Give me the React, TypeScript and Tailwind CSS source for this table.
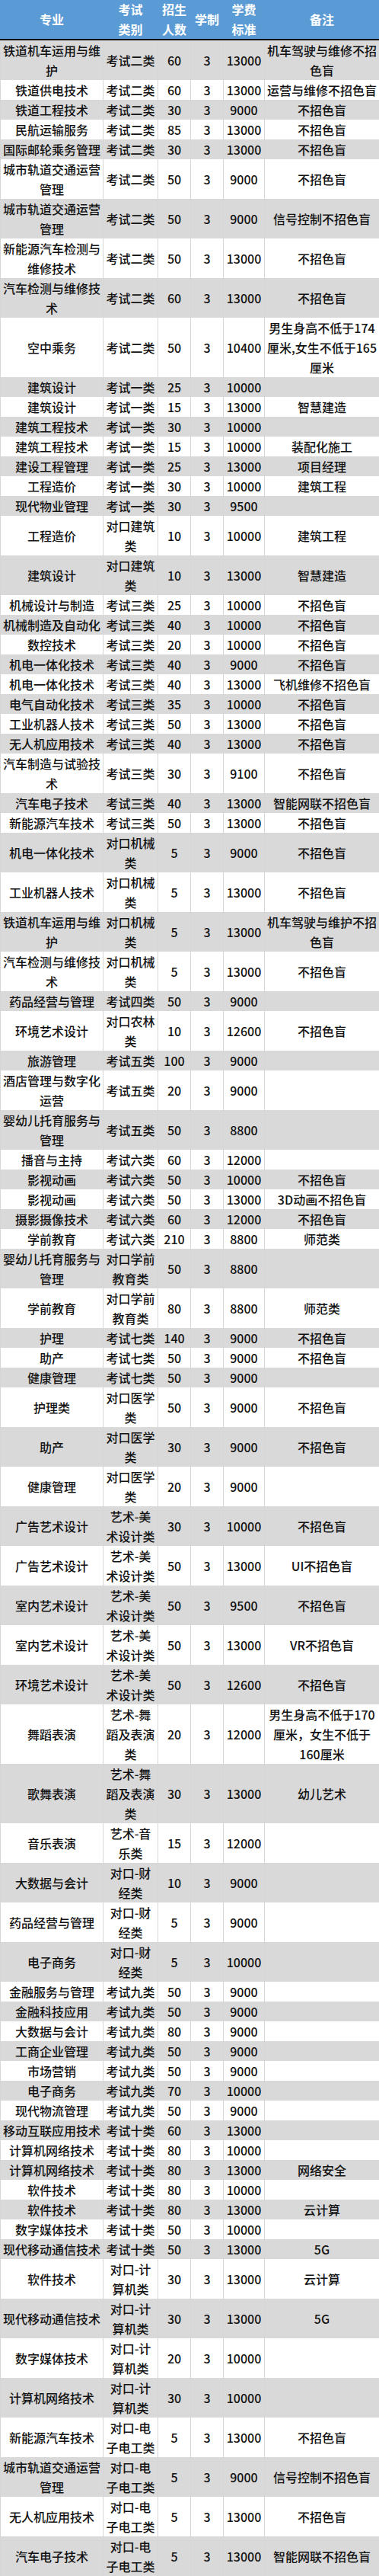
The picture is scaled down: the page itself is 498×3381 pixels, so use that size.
type Row = [string, string, string, string, string, string];

const rows: Row[] = [
  ["铁道机车运用与维护", "考试二类", "60", "3", "13000", "机车驾驶与维修不招色盲"],
  ["铁道供电技术", "考试二类", "60", "3", "13000", "运营与维修不招色盲"],
  ["铁道工程技术", "考试二类", "30", "3", "9000", "不招色盲"],
  ["民航运输服务", "考试二类", "85", "3", "13000", "不招色盲"],
  ["国际邮轮乘务管理", "考试二类", "30", "3", "13000", "不招色盲"],
  ["城市轨道交通运营管理", "考试二类", "50", "3", "9000", "不招色盲"],
  ["城市轨道交通运营管理", "考试二类", "50", "3", "9000", "信号控制不招色盲"],
  ["新能源汽车检测与维修技术", "考试二类", "50", "3", "13000", "不招色盲"],
  ["汽车检测与维修技术", "考试二类", "60", "3", "13000", "不招色盲"],
  ["空中乘务", "考试二类", "50", "3", "10400", "男生身高不低于174厘米,女生不低于165厘米"],
  ["建筑设计", "考试一类", "25", "3", "10000", ""],
  ["建筑设计", "考试一类", "15", "3", "13000", "智慧建造"],
  ["建筑工程技术", "考试一类", "30", "3", "10000", ""],
  ["建筑工程技术", "考试一类", "15", "3", "10000", "装配化施工"],
  ["建设工程管理", "考试一类", "25", "3", "13000", "项目经理"],
  ["工程造价", "考试一类", "30", "3", "10000", "建筑工程"],
  ["现代物业管理", "考试一类", "30", "3", "9500", ""],
  ["工程造价", "对口建筑类", "10", "3", "10000", "建筑工程"],
  ["建筑设计", "对口建筑类", "10", "3", "13000", "智慧建造"],
  ["机械设计与制造", "考试三类", "25", "3", "10000", "不招色盲"],
  ["机械制造及自动化", "考试三类", "40", "3", "10000", "不招色盲"],
  ["数控技术", "考试三类", "20", "3", "10000", "不招色盲"],
  ["机电一体化技术", "考试三类", "40", "3", "9000", "不招色盲"],
  ["机电一体化技术", "考试三类", "40", "3", "13000", "飞机维修不招色盲"],
  ["电气自动化技术", "考试三类", "35", "3", "10000", "不招色盲"],
  ["工业机器人技术", "考试三类", "50", "3", "13000", "不招色盲"],
  ["无人机应用技术", "考试三类", "40", "3", "13000", "不招色盲"],
  ["汽车制造与试验技术", "考试三类", "30", "3", "9100", "不招色盲"],
  ["汽车电子技术", "考试三类", "40", "3", "13000", "智能网联不招色盲"],
  ["新能源汽车技术", "考试三类", "50", "3", "13000", "不招色盲"],
  ["机电一体化技术", "对口机械类", "5", "3", "9000", "不招色盲"],
  ["工业机器人技术", "对口机械类", "5", "3", "13000", "不招色盲"],
  ["铁道机车运用与维护", "对口机械类", "5", "3", "13000", "机车驾驶与维护不招色盲"],
  ["汽车检测与维修技术", "对口机械类", "5", "3", "13000", "不招色盲"],
  ["药品经营与管理", "考试四类", "50", "3", "9000", ""],
  ["环境艺术设计", "对口农林类", "10", "3", "12600", "不招色盲"],
  ["旅游管理", "考试五类", "100", "3", "9000", ""],
  ["酒店管理与数字化运营", "考试五类", "20", "3", "9000", ""],
  ["婴幼儿托育服务与管理", "考试五类", "50", "3", "8800", ""],
  ["播音与主持", "考试六类", "60", "3", "12000", ""],
  ["影视动画", "考试六类", "50", "3", "10000", "不招色盲"],
  ["影视动画", "考试六类", "50", "3", "13000", "3D动画不招色盲"],
  ["摄影摄像技术", "考试六类", "60", "3", "12000", "不招色盲"],
  ["学前教育", "考试六类", "210", "3", "8800", "师范类"],
  ["婴幼儿托育服务与管理", "对口学前教育类", "50", "3", "8800", ""],
  ["学前教育", "对口学前教育类", "80", "3", "8800", "师范类"],
  ["护理", "考试七类", "140", "3", "9000", "不招色盲"],
  ["助产", "考试七类", "50", "3", "9000", "不招色盲"],
  ["健康管理", "考试七类", "50", "3", "9000", ""],
  ["护理类", "对口医学类", "50", "3", "9000", "不招色盲"],
  ["助产", "对口医学类", "30", "3", "9000", "不招色盲"],
  ["健康管理", "对口医学类", "20", "3", "9000", ""],
  ["广告艺术设计", "艺术-美术设计类", "30", "3", "10000", "不招色盲"],
  ["广告艺术设计", "艺术-美术设计类", "50", "3", "13000", "UI不招色盲"],
  ["室内艺术设计", "艺术-美术设计类", "50", "3", "9500", "不招色盲"],
  ["室内艺术设计", "艺术-美术设计类", "50", "3", "13000", "VR不招色盲"],
  ["环境艺术设计", "艺术-美术设计类", "50", "3", "12600", "不招色盲"],
  ["舞蹈表演", "艺术-舞蹈及表演类", "20", "3", "12000", "男生身高不低于170厘米，女生不低于160厘米"],
  ["歌舞表演", "艺术-舞蹈及表演类", "30", "3", "13000", "幼儿艺术"],
  ["音乐表演", "艺术-音乐类", "15", "3", "12000", ""],
  ["大数据与会计", "对口-财经类", "10", "3", "9000", ""],
  ["药品经营与管理", "对口-财经类", "5", "3", "9000", ""],
  ["电子商务", "对口-财经类", "5", "3", "10000", ""],
  ["金融服务与管理", "考试九类", "50", "3", "9000", ""],
  ["金融科技应用", "考试九类", "50", "3", "9000", ""],
  ["大数据与会计", "考试九类", "80", "3", "9000", ""],
  ["工商企业管理", "考试九类", "50", "3", "9000", ""],
  ["市场营销", "考试九类", "50", "3", "9000", ""],
  ["电子商务", "考试九类", "70", "3", "10000", ""],
  ["现代物流管理", "考试九类", "50", "3", "9000", ""],
  ["移动互联应用技术", "考试十类", "60", "3", "13000", ""],
  ["计算机网络技术", "考试十类", "80", "3", "10000", ""],
  ["计算机网络技术", "考试十类", "80", "3", "13000", "网络安全"],
  ["软件技术", "考试十类", "80", "3", "10000", ""],
  ["软件技术", "考试十类", "80", "3", "13000", "云计算"],
  ["数字媒体技术", "考试十类", "50", "3", "10000", ""],
  ["现代移动通信技术", "考试十类", "50", "3", "13000", "5G"],
  ["软件技术", "对口-计算机类", "30", "3", "13000", "云计算"],
  ["现代移动通信技术", "对口-计算机类", "30", "3", "13000", "5G"],
  ["数字媒体技术", "对口-计算机类", "20", "3", "10000", ""],
  ["计算机网络技术", "对口-计算机类", "30", "3", "10000", ""],
  ["新能源汽车技术", "对口-电子电工类", "5", "3", "13000", "不招色盲"],
  ["城市轨道交通运营管理", "对口-电子电工类", "5", "3", "9000", "信号控制不招色盲"],
  ["无人机应用技术", "对口-电子电工类", "5", "3", "13000", "不招色盲"],
  ["汽车电子技术", "对口-电子电工类", "5", "3", "13000", "智能网联不招色盲"],
];

const headers = [["专业"], ["考试", "类别"], ["招生", "人数"], ["学制"], ["学费", "标准"], ["备注"]];

const App = () => {
  return (
    <div className="w-[498px] bg-white font-['Noto_Sans_CJK_SC','Liberation_Sans',sans-serif]">
      <table className="w-[498px] table-fixed border-collapse">
        <colgroup>
          <col className="w-[135px]" />
          <col className="w-[72px]" />
          <col className="w-[43px]" />
          <col className="w-[43px]" />
          <col className="w-[54px]" />
          <col className="w-[151px]" />
        </colgroup>
        <thead>
          <tr className="bg-[#5b9bd5] border-b-2 border-b-[#111111]">
            {headers.map((h, i) => (
              <th
                key={i}
                className="px-[2px] py-0 text-center align-middle text-[16px] leading-[25.5px] font-bold text-white border-x border-x-[#5b9bd5]"
              >
                {h.map((line, j) => (
                  <div key={j}>{line}</div>
                ))}
              </th>
            ))}
          </tr>
        </thead>
        <tbody>
          {rows.map((r, i) => (
            <tr key={i} className={i % 2 === 0 ? "bg-[#d9d9d9]" : "bg-white"}>
              {r.map((c, j) => (
                <td
                  key={j}
                  className="px-[2px] py-0 text-center align-middle text-[16px] leading-[26px] font-medium text-[#111111] border-x border-x-[#d6d6d6] break-words"
                >
                  {c}
                </td>
              ))}
            </tr>
          ))}
        </tbody>
      </table>
    </div>
  );
};

export default App;
